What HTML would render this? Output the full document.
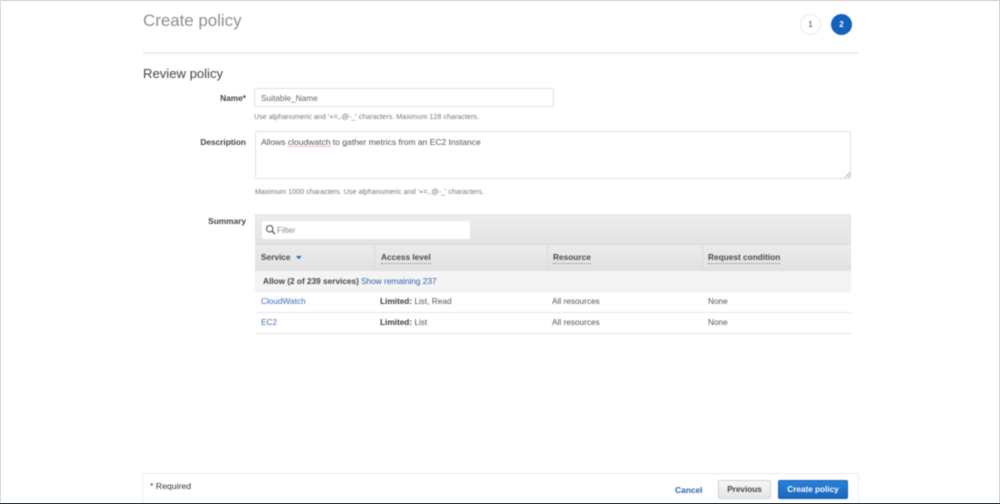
<!DOCTYPE html>
<html>
<head>
<meta charset="utf-8">
<style>
html,body{margin:0;padding:0;width:1000px;height:504px;overflow:hidden;background:#fff}
body{font-family:"Liberation Sans",sans-serif;position:relative}
#w{position:absolute;left:0;top:0;width:1000px;height:504px;filter:blur(.45px)}
.a{position:absolute;white-space:nowrap}
.lbl{font-size:8.3px;font-weight:bold;color:#444;text-align:right;width:100px;left:146px}
.hint{font-size:7.2px;color:#777}
.b{position:absolute;box-sizing:border-box}
.cell{font-size:8.25px;color:#555}
.lnk{color:#2f62ad}
.th{font-size:8.3px;font-weight:bold;color:#4a4a4a}
.dot{border-bottom:1px dotted #888;padding-bottom:1px}
</style>
</head>
<body>
<div id="w">
<div class="a" style="left:143px;top:11px;font-size:16.9px;line-height:20px;color:#8f8f8f">Create policy</div>

<div class="b" style="left:800px;top:14px;width:21px;height:21px;border-radius:50%;border:1px solid #e8e8e8;background:#fff;font-size:8px;line-height:19px;text-align:center;color:#444">1</div>
<div class="b" style="left:831px;top:14px;width:21px;height:21px;border-radius:50%;background:#1560bd;font-size:8px;font-weight:bold;line-height:21px;text-align:center;color:#fff">2</div>

<div class="b" style="left:143px;top:52px;width:715px;height:2px;background:#ececec"></div>

<div class="a" style="left:143px;top:66px;font-size:13.1px;line-height:16px;color:#444">Review policy</div>

<!-- Name -->
<div class="a lbl" style="top:93px;line-height:11px">Name*</div>
<div class="b" style="left:254px;top:88px;width:300px;height:19px;border:1px solid #e0e0e0;border-radius:2px;background:#fff"></div>
<div class="a" style="left:261px;top:92px;font-size:8.3px;line-height:12px;color:#666">Suitable_Name</div>
<div class="a hint" style="left:254px;top:112px;line-height:10px">Use alphanumeric and '+=,.@-_' characters. Maximum 128 characters.</div>

<!-- Description -->
<div class="a lbl" style="top:137px;line-height:11px">Description</div>
<div class="b" style="left:255px;top:131px;width:596px;height:48px;border:1px solid #e0e0e0;border-radius:2px;background:#fff"></div>
<div class="a" style="left:261px;top:136px;font-size:8.5px;line-height:12px;color:#555">Allows cloudwatch to gather metrics from an EC2 Instance</div>
<div class="b" style="left:288px;top:146px;width:43px;height:1px;border-top:1px dotted #e58a8a"></div>
<svg class="a" style="left:844px;top:171px" width="7" height="7" viewBox="0 0 7 7"><path d="M1 6.5L6.5 1M4 6.5L6.5 4" stroke="#999" stroke-width=".7" fill="none"/></svg>
<div class="a hint" style="left:255px;top:187px;line-height:10px">Maximum 1000 characters. Use alphanumeric and '+=,.@-_' characters.</div>

<!-- Summary -->
<div class="a lbl" style="top:215.5px;line-height:11px">Summary</div>
<div class="b" style="left:255px;top:214px;width:596px;height:31px;background:linear-gradient(#ededed,#e3e3e3);border:1px solid #e4e4e4;border-bottom:1px solid #dadada"></div>
<div class="b" style="left:262px;top:221px;width:208px;height:18px;background:#fff;border-radius:2px"></div>
<svg class="a" style="left:265px;top:224px" width="11" height="11" viewBox="0 0 11 11"><circle cx="4.7" cy="4.7" r="3.2" stroke="#555" stroke-width="1.1" fill="none"/><path d="M7 7L10 10" stroke="#555" stroke-width="1.3" fill="none"/></svg>
<div class="a" style="left:277px;top:224px;font-size:8.3px;line-height:12px;color:#8c8c8c">Filter</div>

<div class="b" style="left:255px;top:245px;width:596px;height:26px;background:linear-gradient(#ebebeb,#e2e2e2);border-bottom:1px solid #dedede"></div>
<div class="b" style="left:374px;top:245px;width:1px;height:26px;background:#dadada"></div>
<div class="b" style="left:547px;top:245px;width:1px;height:26px;background:#dadada"></div>
<div class="b" style="left:702px;top:245px;width:1px;height:26px;background:#dadada"></div>
<div class="a th" style="left:261px;top:252px;line-height:11px">Service</div>
<svg class="a" style="left:296px;top:256px" width="6" height="4" viewBox="0 0 6 4"><path d="M0 0H5.6L2.8 3.2Z" fill="#1f66c1"/></svg>
<div class="a th" style="left:381px;top:252px;line-height:11px"><span class="dot">Access level</span></div>
<div class="a th" style="left:553px;top:252px;line-height:11px"><span class="dot">Resource</span></div>
<div class="a th" style="left:708px;top:252px;line-height:11px"><span class="dot">Request condition</span></div>

<div class="b" style="left:255px;top:271px;width:596px;height:21px;background:#f4f4f4;border-bottom:1px solid #e8e8e8"></div>
<div class="a" style="left:263px;top:276px;font-size:8.25px;line-height:12px;font-weight:bold;color:#444">Allow (2 of 239 services)</div>
<div class="a lnk" style="left:361px;top:275px;font-size:8.3px;line-height:12px">Show remaining 237</div>

<div class="a cell lnk" style="left:261px;top:296px;line-height:12px;color:#3d6cb5">CloudWatch</div>
<div class="a cell" style="left:380px;top:296px;line-height:12px"><b style="color:#3a3a3a">Limited:</b> List, Read</div>
<div class="a cell" style="left:552px;top:296px;line-height:12px">All resources</div>
<div class="a cell" style="left:708px;top:296px;line-height:12px">None</div>
<div class="b" style="left:255px;top:312px;width:596px;height:1px;background:#e6e6e6"></div>

<div class="a cell lnk" style="left:261px;top:317px;line-height:12px;color:#3d6cb5">EC2</div>
<div class="a cell" style="left:380px;top:317px;line-height:12px"><b style="color:#3a3a3a">Limited:</b> List</div>
<div class="a cell" style="left:552px;top:317px;line-height:12px">All resources</div>
<div class="a cell" style="left:708px;top:317px;line-height:12px">None</div>
<div class="b" style="left:255px;top:333px;width:596px;height:1px;background:#e6e6e6"></div>

<!-- Footer -->
<div class="b" style="left:142px;top:473px;width:717px;height:31px;background:#fff;border:1px solid #ececec;border-bottom:0;border-radius:2px 2px 0 0"></div>
<div class="a" style="left:150px;top:480px;font-size:8.7px;line-height:12px;color:#333">* Required</div>
<div class="a" style="left:675px;top:484px;font-size:8.4px;line-height:12px;font-weight:bold;color:#2d5fae">Cancel</div>
<div class="b" style="left:718px;top:480px;width:53px;height:19px;border:1px solid #d2d2d2;border-radius:2px;background:linear-gradient(#f6f6f6,#e6e6e6);font-size:8.2px;font-weight:bold;line-height:18px;text-align:center;color:#444">Previous</div>
<div class="b" style="left:778px;top:480px;width:70px;height:19px;border:1px solid #1b62b8;border-radius:2px;background:linear-gradient(#2a80d8,#1a66bf);font-size:8.2px;font-weight:bold;line-height:18px;text-align:center;color:#fff">Create policy</div>
</div>
<!-- window edges, kept sharp outside the blur -->
<div class="b" style="left:0;top:0;width:1000px;height:1px;background:#d6d6d6"></div>
<div class="b" style="left:0;top:0;width:1px;height:504px;background:#dcdcdc"></div>
<div class="b" style="left:999px;top:0;width:1px;height:504px;background:#d4d4d4"></div>
<div class="b" style="left:0;top:503px;width:1000px;height:1px;background:#2b3338"></div>
</body>
</html>
